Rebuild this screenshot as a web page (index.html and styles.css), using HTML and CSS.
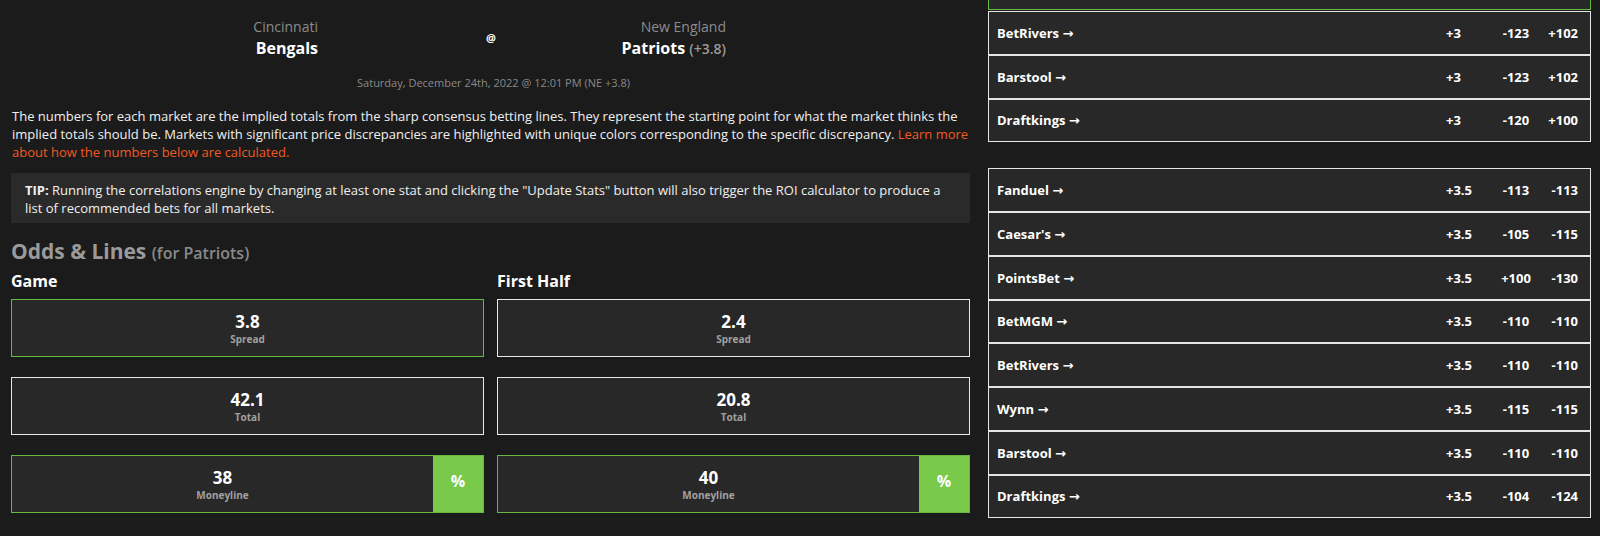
FILE: index.html
```html
<!DOCTYPE html>
<html lang="en">
<head>
<meta charset="utf-8">
<title>Bengals @ Patriots</title>
<link rel="stylesheet" href="styles.css">
</head>
<body>
<div class="page">
  <main class="left">
    <div class="matchup">
      <div class="team team-away">
        <div class="city">Cincinnati</div>
        <div class="name">Bengals</div>
      </div>
      <div class="at">@</div>
      <div class="team team-home">
        <div class="city">New England</div>
        <div class="name">Patriots <span class="line">(+3.8)</span></div>
      </div>
    </div>
    <div class="date">Saturday, December 24th, 2022 @ 12:01 PM (NE +3.8)</div>
    <p class="intro">The numbers for each market are the implied totals from the sharp consensus betting lines. They represent the starting point for what the market thinks the implied totals should be. Markets with significant price discrepancies are highlighted with unique colors corresponding to the specific discrepancy. <a class="learn" href="#">Learn more about how the numbers below are calculated.</a></p>
    <div class="tip"><b>TIP:</b> Running the correlations engine by changing at least one stat and clicking the "Update Stats" button will also trigger the ROI calculator to produce a list of recommended bets for all markets.</div>
    <h2 class="odds-title">Odds &amp; Lines <span class="for">(for Patriots)</span></h2>
    <div class="markets">
      <section class="market">
        <h3 class="market-title">Game</h3>
        <div class="stat green"><div class="stat-body"><div class="val">3.8</div><div class="lbl">Spread</div></div></div>
        <div class="stat white"><div class="stat-body"><div class="val">42.1</div><div class="lbl">Total</div></div></div>
        <div class="stat green"><div class="stat-body"><div class="val">38</div><div class="lbl">Moneyline</div></div><div class="pct">%</div></div>
      </section>
      <section class="market">
        <h3 class="market-title">First Half</h3>
        <div class="stat white"><div class="stat-body"><div class="val">2.4</div><div class="lbl">Spread</div></div></div>
        <div class="stat white"><div class="stat-body"><div class="val">20.8</div><div class="lbl">Total</div></div></div>
        <div class="stat green"><div class="stat-body"><div class="val">40</div><div class="lbl">Moneyline</div></div><div class="pct">%</div></div>
      </section>
    </div>
  </main>
  <aside class="right">
    <div class="book-group">
      <div class="book-stub"></div>
      <div class="book"><span class="bk">BetRivers →</span><span class="sp">+3</span><span class="o1">-123</span><span class="o2">+102</span></div>
      <div class="book"><span class="bk">Barstool →</span><span class="sp">+3</span><span class="o1">-123</span><span class="o2">+102</span></div>
      <div class="book"><span class="bk">Draftkings →</span><span class="sp">+3</span><span class="o1">-120</span><span class="o2">+100</span></div>
    </div>
    <div class="book-group group-2">
      <div class="book"><span class="bk">Fanduel →</span><span class="sp">+3.5</span><span class="o1">-113</span><span class="o2">-113</span></div>
      <div class="book"><span class="bk">Caesar's →</span><span class="sp">+3.5</span><span class="o1">-105</span><span class="o2">-115</span></div>
      <div class="book"><span class="bk">PointsBet →</span><span class="sp">+3.5</span><span class="o1">+100</span><span class="o2">-130</span></div>
      <div class="book"><span class="bk">BetMGM →</span><span class="sp">+3.5</span><span class="o1">-110</span><span class="o2">-110</span></div>
      <div class="book"><span class="bk">BetRivers →</span><span class="sp">+3.5</span><span class="o1">-110</span><span class="o2">-110</span></div>
      <div class="book"><span class="bk">Wynn →</span><span class="sp">+3.5</span><span class="o1">-115</span><span class="o2">-115</span></div>
      <div class="book"><span class="bk">Barstool →</span><span class="sp">+3.5</span><span class="o1">-110</span><span class="o2">-110</span></div>
      <div class="book"><span class="bk">Draftkings →</span><span class="sp">+3.5</span><span class="o1">-104</span><span class="o2">-124</span></div>
    </div>
  </aside>
</div>
</body>
</html>
```

FILE: styles.css
```css
* { box-sizing: border-box; }
html, body {
  margin: 0;
  padding: 0;
  background: #1b1b1b;
  color: #f2f2f2;
  font-family: "Open Sans", "Noto Sans", "DejaVu Sans", sans-serif;
}
.page {
  display: flex;
  align-items: flex-start;
  width: 1600px;
  height: 536px;
  overflow: hidden;
}
.left {
  width: 959px;
  margin-left: 11px;
}
.matchup {
  display: flex;
  align-items: flex-start;
  padding-top: 17px;
}
.team { text-align: right; }
.team-away { width: 307px; }
.team-home { width: 229px; }
.city {
  font-size: 14px;
  line-height: 20px;
  color: #8c8c8c;
}
.name {
  font-size: 16px;
  line-height: 22px;
  font-weight: 700;
  color: #ffffff;
}
.name .line {
  font-size: 14px;
  color: #9a9a9a;
  font-weight: 600;
}
.at {
  margin-left: 167px;
  width: 12px;
  padding-top: 14px;
  font-size: 11px;
  line-height: 14px;
  font-weight: 700;
  color: #ffffff;
  text-align: center;
}
.date {
  margin-top: 15px;
  text-align: center;
  padding-left: 6px;
  font-size: 11px;
  line-height: 15px;
  color: #8a8a8a;
}
.intro {
  margin: 17px 0 0 1px;
  font-size: 13px;
  line-height: 18px;
  color: #f0f0f0;
}
.learn {
  color: #f05a24;
  text-decoration: none;
}
.tip {
  margin-top: 12px;
  background: #2a2a2a;
  padding: 8px 14px 6px 14px;
  font-size: 13px;
  line-height: 18px;
  color: #f0f0f0;
}
.tip b { font-weight: 700; }
.odds-title {
  margin: 14px 0 0 0;
  font-size: 21px;
  line-height: 28px;
  font-weight: 700;
  color: #9a9a9a;
}
.odds-title .for {
  font-size: 16px;
  font-weight: 600;
  color: #8a8a8a;
}
.markets {
  display: grid;
  grid-template-columns: 473px 473px;
  column-gap: 13px;
}
.market-title {
  margin: 3px 0 7px 0;
  font-size: 16px;
  line-height: 22px;
  font-weight: 700;
  color: #ffffff;
}
.stat {
  display: flex;
  height: 58px;
  margin-bottom: 20px;
  background: #282828;
  border: 1px solid #e8e8e8;
}
.stat.green { border-color: #68b83f; }
.stat-body {
  flex: 1;
  display: flex;
  flex-direction: column;
  align-items: center;
  justify-content: center;
  padding-top: 1px;
}
.val {
  font-size: 17px;
  line-height: 21px;
  font-weight: 700;
  color: #ffffff;
}
.lbl {
  font-size: 10px;
  line-height: 14px;
  font-weight: 700;
  color: #a0a0a0;
}
.pct {
  width: 50px;
  background: #79c94a;
  color: #ffffff;
  font-weight: 700;
  font-size: 16px;
  display: flex;
  align-items: center;
  justify-content: center;
  padding-bottom: 6px;
}
.right {
  width: 603px;
  margin-left: 18px;
}
.book-group {
  display: flex;
  flex-direction: column;
}
.group-2 { margin-top: 26px; }
.book-stub {
  height: 10px;
  background: #282828;
  border: 1px solid #68b83f;
  border-top: none;
}
.book {
  display: grid;
  grid-template-columns: 1fr 50px 40px 42px;
  align-items: center;
  height: 43.75px;
  padding: 0 12px 0 8px;
  background: #282828;
  border: 1px solid #e6e6e6;
  font-size: 13px;
  font-weight: 700;
  color: #ffffff;
}
.book-stub + .book { margin-top: 1px; }
.book .o1 { text-align: center; }
.book .o2 { text-align: right; }
```
